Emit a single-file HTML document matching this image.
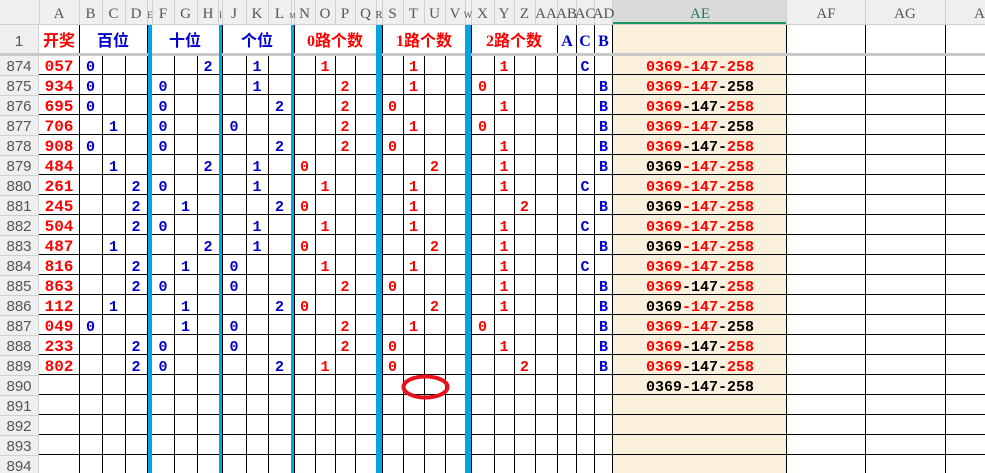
<!DOCTYPE html>
<html><head><meta charset="utf-8"><style>
html,body{margin:0;padding:0;background:#fff;overflow:hidden}
svg{display:block}
.ch{font-family:"Liberation Serif","Noto Serif CJK SC",serif;font-size:15px;fill:#555;text-anchor:middle}
.rh{font-family:"Liberation Sans",sans-serif;font-size:15px;fill:#555;text-anchor:middle}
.h1{font-family:"Liberation Serif","Noto Sans CJK SC",sans-serif;font-size:16px;font-weight:bold;text-anchor:middle}
.d{font-family:"Liberation Mono",monospace;font-size:15px;font-weight:bold;text-anchor:middle}
.a{font-family:"Liberation Mono",monospace;font-size:16px;font-weight:bold;text-anchor:middle;fill:#f00}
.b{fill:#0000cc}.r{fill:#f00}.k{fill:#000}
</style></head><body>
<svg width="985" height="473" xmlns="http://www.w3.org/2000/svg">
<rect x="0" y="0" width="985" height="25" fill="#efefef"/>
<rect x="0" y="0" width="39" height="473" fill="#efefef"/>
<rect x="613" y="0" width="174" height="25" fill="#d9d9d9"/>
<rect x="613" y="22" width="174" height="3" fill="#1e9660"/>
<rect x="613" y="25" width="174" height="448" fill="#faf0dc"/>
<g stroke="#d0d0d0" stroke-width="1">
<line x1="39.5" y1="0" x2="39.5" y2="25"/><line x1="79.5" y1="0" x2="79.5" y2="25"/><line x1="102.5" y1="0" x2="102.5" y2="25"/><line x1="125.5" y1="0" x2="125.5" y2="25"/><line x1="147.5" y1="0" x2="147.5" y2="25"/><line x1="152.5" y1="0" x2="152.5" y2="25"/><line x1="174.5" y1="0" x2="174.5" y2="25"/><line x1="197.5" y1="0" x2="197.5" y2="25"/><line x1="218.5" y1="0" x2="218.5" y2="25"/><line x1="222.5" y1="0" x2="222.5" y2="25"/><line x1="246.5" y1="0" x2="246.5" y2="25"/><line x1="268.5" y1="0" x2="268.5" y2="25"/><line x1="291.5" y1="0" x2="291.5" y2="25"/><line x1="294.5" y1="0" x2="294.5" y2="25"/><line x1="315.5" y1="0" x2="315.5" y2="25"/><line x1="335.5" y1="0" x2="335.5" y2="25"/><line x1="355.5" y1="0" x2="355.5" y2="25"/><line x1="376.5" y1="0" x2="376.5" y2="25"/><line x1="382.5" y1="0" x2="382.5" y2="25"/><line x1="403.5" y1="0" x2="403.5" y2="25"/><line x1="424.5" y1="0" x2="424.5" y2="25"/><line x1="445.5" y1="0" x2="445.5" y2="25"/><line x1="465.5" y1="0" x2="465.5" y2="25"/><line x1="471.5" y1="0" x2="471.5" y2="25"/><line x1="494.5" y1="0" x2="494.5" y2="25"/><line x1="514.5" y1="0" x2="514.5" y2="25"/><line x1="535.5" y1="0" x2="535.5" y2="25"/><line x1="557.5" y1="0" x2="557.5" y2="25"/><line x1="576.5" y1="0" x2="576.5" y2="25"/><line x1="594.5" y1="0" x2="594.5" y2="25"/><line x1="612.5" y1="0" x2="612.5" y2="25"/><line x1="786.5" y1="0" x2="786.5" y2="25"/><line x1="865.5" y1="0" x2="865.5" y2="25"/><line x1="945.5" y1="0" x2="945.5" y2="25"/>
<line x1="0" y1="24.5" x2="985" y2="24.5"/>
<line x1="0" y1="75.5" x2="39" y2="75.5"/><line x1="0" y1="95.5" x2="39" y2="95.5"/><line x1="0" y1="115.5" x2="39" y2="115.5"/><line x1="0" y1="135.5" x2="39" y2="135.5"/><line x1="0" y1="155.5" x2="39" y2="155.5"/><line x1="0" y1="175.5" x2="39" y2="175.5"/><line x1="0" y1="195.5" x2="39" y2="195.5"/><line x1="0" y1="215.5" x2="39" y2="215.5"/><line x1="0" y1="235.5" x2="39" y2="235.5"/><line x1="0" y1="255.5" x2="39" y2="255.5"/><line x1="0" y1="275.5" x2="39" y2="275.5"/><line x1="0" y1="295.5" x2="39" y2="295.5"/><line x1="0" y1="315.5" x2="39" y2="315.5"/><line x1="0" y1="335.5" x2="39" y2="335.5"/><line x1="0" y1="355.5" x2="39" y2="355.5"/><line x1="0" y1="375.5" x2="39" y2="375.5"/><line x1="0" y1="395.5" x2="39" y2="395.5"/><line x1="0" y1="415.5" x2="39" y2="415.5"/><line x1="0" y1="435.5" x2="39" y2="435.5"/><line x1="0" y1="455.5" x2="39" y2="455.5"/>
<line x1="38.5" y1="25" x2="38.5" y2="473"/>
</g>
<g stroke="#000" stroke-width="1">
<line x1="79.5" y1="25" x2="79.5" y2="53"/><line x1="147.5" y1="25" x2="147.5" y2="53"/><line x1="222.5" y1="25" x2="222.5" y2="53"/><line x1="294.5" y1="25" x2="294.5" y2="53"/><line x1="382.5" y1="25" x2="382.5" y2="53"/><line x1="471.5" y1="25" x2="471.5" y2="53"/><line x1="557.5" y1="25" x2="557.5" y2="53"/><line x1="576.5" y1="25" x2="576.5" y2="53"/><line x1="594.5" y1="25" x2="594.5" y2="53"/><line x1="612.5" y1="25" x2="612.5" y2="53"/><line x1="786.5" y1="25" x2="786.5" y2="53"/><line x1="865.5" y1="25" x2="865.5" y2="53"/><line x1="945.5" y1="25" x2="945.5" y2="53"/>
</g>
<g stroke="#000" stroke-width="1">
<line x1="79.5" y1="56" x2="79.5" y2="473"/><line x1="102.5" y1="56" x2="102.5" y2="473"/><line x1="125.5" y1="56" x2="125.5" y2="473"/><line x1="147.5" y1="56" x2="147.5" y2="473"/><line x1="174.5" y1="56" x2="174.5" y2="473"/><line x1="197.5" y1="56" x2="197.5" y2="473"/><line x1="222.5" y1="56" x2="222.5" y2="473"/><line x1="246.5" y1="56" x2="246.5" y2="473"/><line x1="268.5" y1="56" x2="268.5" y2="473"/><line x1="294.5" y1="56" x2="294.5" y2="473"/><line x1="315.5" y1="56" x2="315.5" y2="473"/><line x1="335.5" y1="56" x2="335.5" y2="473"/><line x1="355.5" y1="56" x2="355.5" y2="473"/><line x1="382.5" y1="56" x2="382.5" y2="473"/><line x1="403.5" y1="56" x2="403.5" y2="473"/><line x1="424.5" y1="56" x2="424.5" y2="473"/><line x1="445.5" y1="56" x2="445.5" y2="473"/><line x1="471.5" y1="56" x2="471.5" y2="473"/><line x1="494.5" y1="56" x2="494.5" y2="473"/><line x1="514.5" y1="56" x2="514.5" y2="473"/><line x1="535.5" y1="56" x2="535.5" y2="473"/><line x1="557.5" y1="56" x2="557.5" y2="473"/><line x1="576.5" y1="56" x2="576.5" y2="473"/><line x1="594.5" y1="56" x2="594.5" y2="473"/><line x1="612.5" y1="56" x2="612.5" y2="473"/><line x1="786.5" y1="56" x2="786.5" y2="473"/><line x1="865.5" y1="56" x2="865.5" y2="473"/><line x1="945.5" y1="56" x2="945.5" y2="473"/>
<line x1="39" y1="74.5" x2="985" y2="74.5"/><line x1="39" y1="94.5" x2="985" y2="94.5"/><line x1="39" y1="114.5" x2="985" y2="114.5"/><line x1="39" y1="134.5" x2="985" y2="134.5"/><line x1="39" y1="154.5" x2="985" y2="154.5"/><line x1="39" y1="174.5" x2="985" y2="174.5"/><line x1="39" y1="194.5" x2="985" y2="194.5"/><line x1="39" y1="214.5" x2="985" y2="214.5"/><line x1="39" y1="234.5" x2="985" y2="234.5"/><line x1="39" y1="254.5" x2="985" y2="254.5"/><line x1="39" y1="274.5" x2="985" y2="274.5"/><line x1="39" y1="294.5" x2="985" y2="294.5"/><line x1="39" y1="314.5" x2="985" y2="314.5"/><line x1="39" y1="334.5" x2="985" y2="334.5"/><line x1="39" y1="354.5" x2="985" y2="354.5"/><line x1="39" y1="374.5" x2="985" y2="374.5"/><line x1="39" y1="394.5" x2="985" y2="394.5"/><line x1="39" y1="414.5" x2="985" y2="414.5"/><line x1="39" y1="434.5" x2="985" y2="434.5"/><line x1="39" y1="454.5" x2="985" y2="454.5"/>
</g>
<rect x="0" y="53" width="985" height="3" fill="#c8c8c8"/>
<g fill="#00a2e8">
<rect x="148" y="25" width="4" height="448"/><rect x="219" y="25" width="3" height="448"/><rect x="291" y="25" width="3" height="448"/><rect x="376" y="25" width="6" height="448"/><rect x="465" y="25" width="6" height="448"/>
</g>
<g class="ch">
<text x="59" y="18">A</text><text x="90.5" y="18">B</text><text x="113.5" y="18">C</text><text x="136" y="18">D</text><text x="150" y="18" font-size="9">E</text><text x="163" y="18">F</text><text x="185.5" y="18">G</text><text x="208" y="18">H</text><text x="220.5" y="18" font-size="9">I</text><text x="234" y="18">J</text><text x="257" y="18">K</text><text x="279.5" y="18">L</text><text x="292.5" y="18" font-size="7">M</text><text x="304.5" y="18">N</text><text x="325" y="18">O</text><text x="345" y="18">P</text><text x="365.5" y="18">Q</text><text x="379" y="18" font-size="11">R</text><text x="392.5" y="18">S</text><text x="413.5" y="18">T</text><text x="434.5" y="18">U</text><text x="455" y="18">V</text><text x="468" y="18" font-size="9">W</text><text x="482.5" y="18">X</text><text x="504" y="18">Y</text><text x="524.5" y="18">Z</text><text x="546" y="18">AA</text><text x="566.5" y="18">AB</text><text x="585" y="18">AC</text><text x="603.5" y="18">AD</text><text x="700" y="18" fill="#1e7a50">AE</text><text x="826" y="18">AF</text><text x="905" y="18">AG</text><text x="985" y="18">AH</text>
</g>
<g class="rh">
<text x="19" y="46">1</text>
<text x="19" y="71">874</text><text x="19" y="91">875</text><text x="19" y="111">876</text><text x="19" y="131">877</text><text x="19" y="151">878</text><text x="19" y="171">879</text><text x="19" y="191">880</text><text x="19" y="211">881</text><text x="19" y="231">882</text><text x="19" y="251">883</text><text x="19" y="271">884</text><text x="19" y="291">885</text><text x="19" y="311">886</text><text x="19" y="331">887</text><text x="19" y="351">888</text><text x="19" y="371">889</text><text x="19" y="391">890</text><text x="19" y="411">891</text><text x="19" y="431">892</text><text x="19" y="451">893</text><text x="19" y="471">894</text>
</g>
<g class="h1">
<text x="59" y="46" class="r">开奖</text>
<text x="113" y="46" class="b">百位</text>
<text x="185" y="46" class="b">十位</text>
<text x="257" y="46" class="b">个位</text>
<text x="335" y="46" class="r">0路个数</text>
<text x="424" y="46" class="r">1路个数</text>
<text x="514" y="46" class="r">2路个数</text>
<text x="567" y="46" class="b">A</text><text x="585" y="46" class="b">C</text><text x="603.5" y="46" class="b">B</text>
</g>
<g class="a">
<text x="59" y="71">057</text><text x="59" y="91">934</text><text x="59" y="111">695</text><text x="59" y="131">706</text><text x="59" y="151">908</text><text x="59" y="171">484</text><text x="59" y="191">261</text><text x="59" y="211">245</text><text x="59" y="231">504</text><text x="59" y="251">487</text><text x="59" y="271">816</text><text x="59" y="291">863</text><text x="59" y="311">112</text><text x="59" y="331">049</text><text x="59" y="351">233</text><text x="59" y="371">802</text>
</g>
<g class="d b">
<text x="90.5" y="71">0</text><text x="208" y="71">2</text><text x="257" y="71">1</text><text x="585" y="71">C</text>
<text x="90.5" y="91">0</text><text x="163" y="91">0</text><text x="257" y="91">1</text><text x="603.5" y="91">B</text>
<text x="90.5" y="111">0</text><text x="163" y="111">0</text><text x="279.5" y="111">2</text><text x="603.5" y="111">B</text>
<text x="113.5" y="131">1</text><text x="163" y="131">0</text><text x="234" y="131">0</text><text x="603.5" y="131">B</text>
<text x="90.5" y="151">0</text><text x="163" y="151">0</text><text x="279.5" y="151">2</text><text x="603.5" y="151">B</text>
<text x="113.5" y="171">1</text><text x="208" y="171">2</text><text x="257" y="171">1</text><text x="603.5" y="171">B</text>
<text x="136" y="191">2</text><text x="163" y="191">0</text><text x="257" y="191">1</text><text x="585" y="191">C</text>
<text x="136" y="211">2</text><text x="185.5" y="211">1</text><text x="279.5" y="211">2</text><text x="603.5" y="211">B</text>
<text x="136" y="231">2</text><text x="163" y="231">0</text><text x="257" y="231">1</text><text x="585" y="231">C</text>
<text x="113.5" y="251">1</text><text x="208" y="251">2</text><text x="257" y="251">1</text><text x="603.5" y="251">B</text>
<text x="136" y="271">2</text><text x="185.5" y="271">1</text><text x="234" y="271">0</text><text x="585" y="271">C</text>
<text x="136" y="291">2</text><text x="163" y="291">0</text><text x="234" y="291">0</text><text x="603.5" y="291">B</text>
<text x="113.5" y="311">1</text><text x="185.5" y="311">1</text><text x="279.5" y="311">2</text><text x="603.5" y="311">B</text>
<text x="90.5" y="331">0</text><text x="185.5" y="331">1</text><text x="234" y="331">0</text><text x="603.5" y="331">B</text>
<text x="136" y="351">2</text><text x="163" y="351">0</text><text x="234" y="351">0</text><text x="603.5" y="351">B</text>
<text x="136" y="371">2</text><text x="163" y="371">0</text><text x="279.5" y="371">2</text><text x="603.5" y="371">B</text>
</g>
<g class="d r">
<text x="325" y="71">1</text><text x="413.5" y="71">1</text><text x="504" y="71">1</text>
<text x="345" y="91">2</text><text x="413.5" y="91">1</text><text x="482.5" y="91">0</text>
<text x="345" y="111">2</text><text x="392.5" y="111">0</text><text x="504" y="111">1</text>
<text x="345" y="131">2</text><text x="413.5" y="131">1</text><text x="482.5" y="131">0</text>
<text x="345" y="151">2</text><text x="392.5" y="151">0</text><text x="504" y="151">1</text>
<text x="304.5" y="171">0</text><text x="434.5" y="171">2</text><text x="504" y="171">1</text>
<text x="325" y="191">1</text><text x="413.5" y="191">1</text><text x="504" y="191">1</text>
<text x="304.5" y="211">0</text><text x="413.5" y="211">1</text><text x="524.5" y="211">2</text>
<text x="325" y="231">1</text><text x="413.5" y="231">1</text><text x="504" y="231">1</text>
<text x="304.5" y="251">0</text><text x="434.5" y="251">2</text><text x="504" y="251">1</text>
<text x="325" y="271">1</text><text x="413.5" y="271">1</text><text x="504" y="271">1</text>
<text x="345" y="291">2</text><text x="392.5" y="291">0</text><text x="504" y="291">1</text>
<text x="304.5" y="311">0</text><text x="434.5" y="311">2</text><text x="504" y="311">1</text>
<text x="345" y="331">2</text><text x="413.5" y="331">1</text><text x="482.5" y="331">0</text>
<text x="345" y="351">2</text><text x="392.5" y="351">0</text><text x="504" y="351">1</text>
<text x="325" y="371">1</text><text x="392.5" y="371">0</text><text x="524.5" y="371">2</text>
</g>
<g class="d">
<text x="700" y="71"><tspan class="r">0369-147-258</tspan></text>
<text x="700" y="91"><tspan class="r">0369-147</tspan><tspan class="k">-258</tspan></text>
<text x="700" y="111"><tspan class="r">0369</tspan><tspan class="k">-147-</tspan><tspan class="r">258</tspan></text>
<text x="700" y="131"><tspan class="r">0369-147</tspan><tspan class="k">-258</tspan></text>
<text x="700" y="151"><tspan class="r">0369</tspan><tspan class="k">-147-</tspan><tspan class="r">258</tspan></text>
<text x="700" y="171"><tspan class="k">0369</tspan><tspan class="r">-147-258</tspan></text>
<text x="700" y="191"><tspan class="r">0369-147-258</tspan></text>
<text x="700" y="211"><tspan class="k">0369</tspan><tspan class="r">-147-258</tspan></text>
<text x="700" y="231"><tspan class="r">0369-147-258</tspan></text>
<text x="700" y="251"><tspan class="k">0369</tspan><tspan class="r">-147-258</tspan></text>
<text x="700" y="271"><tspan class="r">0369-147-258</tspan></text>
<text x="700" y="291"><tspan class="r">0369</tspan><tspan class="k">-147-</tspan><tspan class="r">258</tspan></text>
<text x="700" y="311"><tspan class="k">0369</tspan><tspan class="r">-147-258</tspan></text>
<text x="700" y="331"><tspan class="r">0369-147</tspan><tspan class="k">-258</tspan></text>
<text x="700" y="351"><tspan class="r">0369</tspan><tspan class="k">-147-</tspan><tspan class="r">258</tspan></text>
<text x="700" y="371"><tspan class="r">0369</tspan><tspan class="k">-147-</tspan><tspan class="r">258</tspan></text>
<text x="700" y="391"><tspan class="k">0369-147-258</tspan></text>
</g>
<ellipse cx="425.5" cy="387" rx="22" ry="10.5" fill="none" stroke="#e8121e" stroke-width="4"/>
</svg>
</body></html>
